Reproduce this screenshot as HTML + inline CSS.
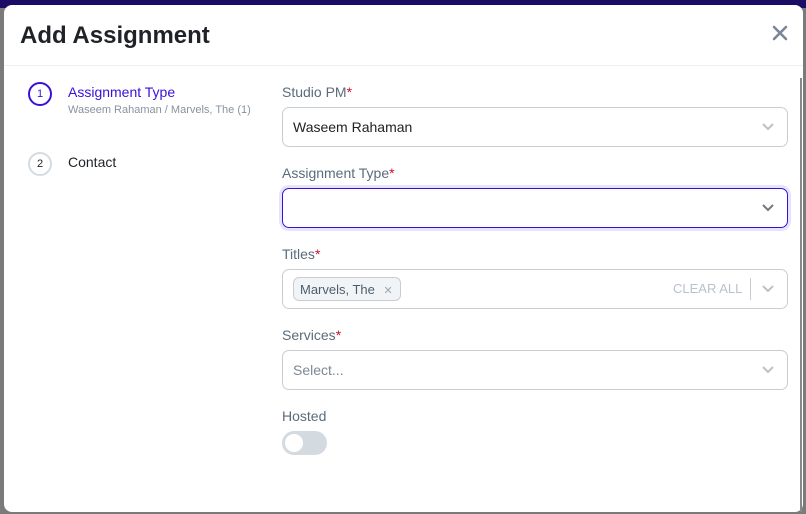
<!DOCTYPE html>
<html><head><style>
body{margin:0;width:806px;height:514px;background:#7b7b7b;position:relative;overflow:hidden;font-family:"Liberation Sans",sans-serif}
.top{position:absolute;left:0;top:0;width:806px;height:8px;background:#1c0c66}
.modal{position:absolute;left:4px;top:5px;width:799px;height:507px;background:#fff;border-radius:8px}
.hdr{position:absolute;left:0;top:0;width:100%;height:60px;border-bottom:1px solid #eceff2}
h1{position:absolute;left:16px;top:17px;margin:0;font-size:24px;font-weight:bold;color:#1f2328}
.x{position:absolute;left:768px;top:20px}
.circ{position:absolute;width:24px;height:24px;border-radius:50%;font-size:11px;text-align:center;line-height:20px;box-sizing:border-box}
.a{position:absolute;font-size:14px}
.lbl{position:absolute;left:278px;font-size:14px;color:#5b6b7c}
.lbl b{color:#c8102e;font-weight:normal}
.inp{position:absolute;left:278px;width:506px;height:40px;box-sizing:border-box;border:1px solid #c9cdd1;border-radius:7px;font-size:14px;color:#222;line-height:38px;padding-left:10px}
.chev{position:absolute;right:12px;top:14px}
.sb{position:absolute;left:796px;top:73px;width:2px;height:434px;background:#888}
</style></head><body>
<div class="top"></div>
<div class="modal">
<div class="hdr"><h1>Add Assignment</h1><svg class="x" width="16" height="16"><path d="M2 2L14 14M14 2L2 14" stroke="#7a8896" stroke-width="2.6" stroke-linecap="round"/></svg></div>
<div class="circ" style="left:24px;top:77px;border:2px solid #3a10d8;color:#3a10d8">1</div>
<div class="a" style="left:64px;top:79px;color:#3a10d8">Assignment Type</div>
<div class="a" style="left:64px;top:99px;font-size:11px;color:#8793a0">Waseem Rahaman / Marvels, The (1)</div>
<div class="circ" style="left:24px;top:147px;border:2px solid #d3dbe1;color:#222">2</div>
<div class="a" style="left:64px;top:149px;color:#1f2328">Contact</div>

<div class="lbl" style="top:79px">Studio PM<b>*</b></div>
<div class="inp" style="top:102px">Waseem Rahaman<svg class="chev" width="14" height="10"><path d="M2 2l5 5 5-5" stroke="#b8c2cb" stroke-width="2" fill="none"/></svg></div>
<div class="lbl" style="top:160px">Assignment Type<b>*</b></div>
<div class="inp" style="top:183px;border:1.5px solid #3a10d8;box-shadow:0 0 0 3px #e6e3fb"><svg class="chev" width="14" height="10"><path d="M2 2l5 5 5-5" stroke="#6c7a88" stroke-width="2" fill="none"/></svg></div>
<div class="lbl" style="top:241px">Titles<b>*</b></div>
<div class="inp" style="top:264px">
<span style="position:absolute;left:10px;top:7px;height:24px;line-height:23px;box-sizing:border-box;border:1px solid #c9cdd1;background:#f1f4f6;border-radius:6px;padding:0 7px 0 6px;color:#4d5d6d;font-size:13px">Marvels, The <span style="color:#9aa6b0;margin-left:5px;font-size:11px">✕</span></span>
<span style="position:absolute;left:390px;top:0;color:#b8c2cb;font-size:13px">CLEAR ALL</span>
<span style="position:absolute;left:467px;top:8px;width:1px;height:22px;background:#c9cdd1"></span>
<svg class="chev" width="14" height="10"><path d="M2 2l5 5 5-5" stroke="#b8c2cb" stroke-width="2" fill="none"/></svg></div>
<div class="lbl" style="top:322px">Services<b>*</b></div>
<div class="inp" style="top:345px;color:#7d8894">Select...<svg class="chev" width="14" height="10"><path d="M2 2l5 5 5-5" stroke="#b8c2cb" stroke-width="2" fill="none"/></svg></div>
<div class="lbl" style="top:403px">Hosted</div>
<div style="position:absolute;left:278px;top:426px;width:45px;height:24px;border-radius:12px;background:#d3dbe1"><div style="position:absolute;left:3px;top:3px;width:18px;height:18px;border-radius:50%;background:#fff"></div></div>
<div class="sb"></div>
</div>
</body></html>
